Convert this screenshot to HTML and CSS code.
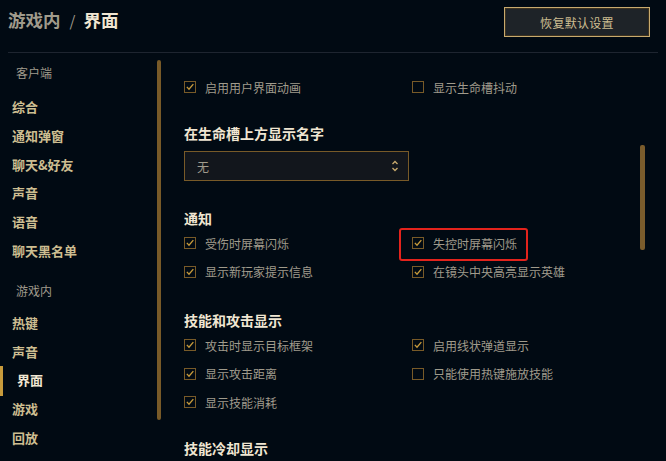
FILE: index.html
```html
<!DOCTYPE html>
<html lang="zh-CN">
<head>
<meta charset="utf-8">
<link rel="stylesheet" href="styles.css">
</head>
<body>
<div class="app">
  <header class="header">
    <h1 class="title"><span class="crumb">游戏内</span><span class="sep">/</span><span class="current">界面</span></h1>
    <button class="reset-btn">恢复默认设置</button>
  </header>
  <div class="main">
    <nav class="sidebar">
      <div class="nav-group">客户端</div>
      <div class="nav-item">综合</div>
      <div class="nav-item">通知弹窗</div>
      <div class="nav-item">聊天&amp;好友</div>
      <div class="nav-item">声音</div>
      <div class="nav-item">语音</div>
      <div class="nav-item">聊天黑名单</div>
      <div class="nav-group nav-group-2">游戏内</div>
      <div class="nav-item">热键</div>
      <div class="nav-item">声音</div>
      <div class="nav-item active">界面</div>
      <div class="nav-item">游戏</div>
      <div class="nav-item">回放</div>
    </nav>
    <div class="track track-left"><div class="thumb thumb-left"></div></div>
    <section class="content">
      <div class="grid first">
        <div class="opt"><span class="cb checked"><svg viewBox="0 0 12 12"><path d="M2.2 5.8 L4.8 8.6 L10 2.6" /></svg></span>启用用户界面动画</div>
        <div class="opt"><span class="cb"></span>显示生命槽抖动</div>
      </div>
      <h2 class="heading h-names">在生命槽上方显示名字</h2>
      <div class="select">
        <span class="select-value">无</span>
        <svg class="chev" viewBox="0 0 8 14"><path d="M1.5 5 L4 2.5 L6.5 5 M1.5 9 L4 11.5 L6.5 9" /></svg>
      </div>
      <h2 class="heading h-notify">通知</h2>
      <div class="grid">
        <div class="opt"><span class="cb checked"><svg viewBox="0 0 12 12"><path d="M2.2 5.8 L4.8 8.6 L10 2.6" /></svg></span>受伤时屏幕闪烁</div>
        <div class="opt"><span class="mark"><span class="cb checked"><svg viewBox="0 0 12 12"><path d="M2.2 5.8 L4.8 8.6 L10 2.6" /></svg></span>失控时屏幕闪烁</span></div>
        <div class="opt"><span class="cb checked"><svg viewBox="0 0 12 12"><path d="M2.2 5.8 L4.8 8.6 L10 2.6" /></svg></span>显示新玩家提示信息</div>
        <div class="opt"><span class="cb checked"><svg viewBox="0 0 12 12"><path d="M2.2 5.8 L4.8 8.6 L10 2.6" /></svg></span>在镜头中央高亮显示英雄</div>
      </div>
      <h2 class="heading h-skill">技能和攻击显示</h2>
      <div class="grid">
        <div class="opt"><span class="cb checked"><svg viewBox="0 0 12 12"><path d="M2.2 5.8 L4.8 8.6 L10 2.6" /></svg></span>攻击时显示目标框架</div>
        <div class="opt"><span class="cb checked"><svg viewBox="0 0 12 12"><path d="M2.2 5.8 L4.8 8.6 L10 2.6" /></svg></span>启用线状弹道显示</div>
        <div class="opt"><span class="cb checked"><svg viewBox="0 0 12 12"><path d="M2.2 5.8 L4.8 8.6 L10 2.6" /></svg></span>显示攻击距离</div>
        <div class="opt"><span class="cb"></span>只能使用热键施放技能</div>
        <div class="opt"><span class="cb checked"><svg viewBox="0 0 12 12"><path d="M2.2 5.8 L4.8 8.6 L10 2.6" /></svg></span>显示技能消耗</div>
      </div>
      <h2 class="heading h-cd">技能冷却显示</h2>
    </section>
    <div class="track track-right"><div class="thumb thumb-right"></div></div>
  </div>
</div>
</body>
</html>
```
FILE: styles.css
```css
* { box-sizing: border-box; }
html, body {
  margin: 0;
  padding: 0;
  background: #010a13;
  width: 666px;
  height: 461px;
  overflow: hidden;
  font-family: "Noto Sans CJK SC", "Noto Sans", sans-serif;
}
.app {
  width: 666px;
  height: 461px;
  display: flex;
  flex-direction: column;
}
.header {
  margin: 0 8px;
  height: 53px;
  border-bottom: 1px solid #1e2530;
  display: flex;
  justify-content: space-between;
  align-items: flex-start;
}
.title {
  margin: 8px 0 0 0;
  font-size: 17.5px;
  line-height: 24px;
  font-weight: 700;
}
.crumb { color: #a09b8c; }
.sep { color: #a09b8c; margin: 0 8px 0 9px; font-weight: 400; font-size: 15px; }
.current { color: #f0e6d2; }
.reset-btn {
  margin: 7px 8px 0 0;
  width: 146px;
  height: 30px;
  background: #1e2328;
  border: 1px solid #c8aa6e;
  box-shadow: inset 0 0 0 1px #3c3220;
  color: #cdbe91;
  font-family: inherit;
  font-size: 12px;
  padding: 0;
  letter-spacing: 0.3px;
}
.main {
  flex: 1;
  display: flex;
  min-height: 0;
}
.sidebar {
  width: 157px;
  padding-top: 6px;
  display: flex;
  flex-direction: column;
}
.nav-group {
  height: 28px;
  line-height: 28px;
  padding-left: 16px;
  font-size: 12px;
  color: #a09b8c;
  margin-bottom: 6px;
}
.nav-group-2 {
  margin-top: 11px;
  margin-bottom: 4px;
}
.nav-item {
  height: 28.8px;
  line-height: 28.8px;
  padding-left: 12px;
  font-size: 13px;
  font-weight: 700;
  color: #cdbe91;
  position: relative;
}
.nav-item.active {
  color: #f0e6d2;
  padding-left: 17px;
}
.nav-item.active::before {
  content: "";
  position: absolute;
  left: 0;
  top: -0.5px;
  width: 3px;
  height: 30px;
  background: #c89b3c;
}
.track {
  width: 4px;
  display: flex;
  flex-direction: column;
}
.thumb {
  width: 4px;
  background: #785a28;
  border-radius: 2px;
}
.thumb-left { margin-top: 7px; height: 360px; }
.track-right { width: 5px; margin-right: 21px; }
.thumb-right { width: 5px; margin-top: 92px; height: 105px; background: #7a5c2c; }
.content {
  flex: 1;
  padding-left: 23px;
  padding-top: 20px;
  display: flex;
  flex-direction: column;
  align-items: flex-start;
}
.grid {
  display: grid;
  grid-template-columns: 228px 1fr;
  width: 100%;
}
.opt {
  height: 28.5px;
  display: flex;
  align-items: center;
  font-size: 12px;
  color: #a09b8c;
}
.mark {
  position: relative;
  display: flex;
  align-items: center;
}
.mark::after {
  content: "";
  position: absolute;
  left: -13px;
  right: -11px;
  top: -7px;
  bottom: -9px;
  border: 2px solid #e3231c;
  border-radius: 3px;
}
.cb {
  width: 12px;
  height: 12px;
  border: 1px solid #785a28;
  margin-right: 9px;
  display: flex;
  flex-shrink: 0;
}
.cb svg {
  width: 10px;
  height: 10px;
}
.cb svg path {
  fill: none;
  stroke: #c89b3c;
  stroke-width: 1.6;
}
.heading {
  margin: 0;
  height: 22px;
  line-height: 22px;
  font-size: 14px;
  font-weight: 700;
  color: #f0e6d2;
}
.h-names { margin-top: 20.5px; }
.h-notify { margin-top: 26px; }
.h-skill { margin-top: 23px; }
.h-cd { margin-top: 20.5px; }
.select {
  margin-top: 7px;
  width: 225px;
  height: 30px;
  border: 1px solid #785a28;
  background: #12161c;
  display: flex;
  align-items: center;
  justify-content: space-between;
  padding: 0 9px 0 12px;
}
.select-value {
  font-size: 12px;
  color: #a09b8c;
}
.chev {
  width: 8px;
  height: 14px;
}
.chev path {
  fill: none;
  stroke: #c8aa6e;
  stroke-width: 1.3;
}
```
